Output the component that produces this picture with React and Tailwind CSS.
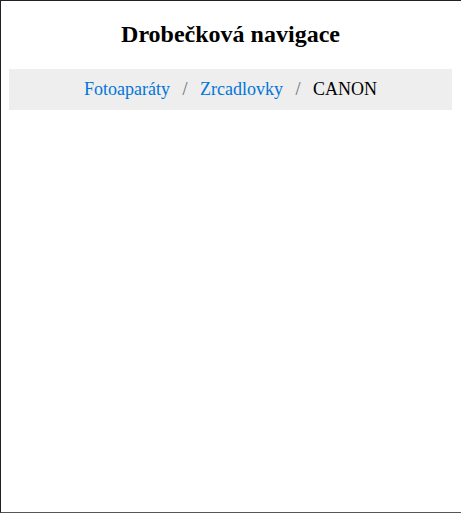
const crumbs = [
  { label: "Fotoaparáty", href: "#" },
  { label: "Zrcadlovky", href: "#" },
  { label: "CANON" },
];

export default function App() {
  return (
    <div
      className="h-[513px] w-[461px] bg-white border-t border-l border-b border-t-[#1e2228] border-l-[#1e2228] border-b-[#555555] text-black overflow-hidden"
      style={{ fontFamily: '"Liberation Serif", "Times New Roman", serif' }}
    >
      <div className="pl-2 pr-[9px] pt-5">
        <h2 className="text-center text-[24px] font-bold leading-[27.6px] mb-5">
          Drobečková navigace
        </h2>

        {/* breadcrumb */}
        <ul className="bg-[#eeeeee] px-4 pt-[10px] pb-[11px] text-center text-[18px] leading-[20.7px]">
          {crumbs.map((c, i) => (
            <li key={c.label} className="inline">
              {i > 0 && <span className="px-2 text-[#636c72]">/&nbsp;</span>}
              {c.href ? (
                <a href={c.href} className="text-[#0275d8]">
                  {c.label}
                </a>
              ) : (
                c.label
              )}
              {i < crumbs.length - 1 && " "}
            </li>
          ))}
        </ul>
      </div>
    </div>
  );
}
